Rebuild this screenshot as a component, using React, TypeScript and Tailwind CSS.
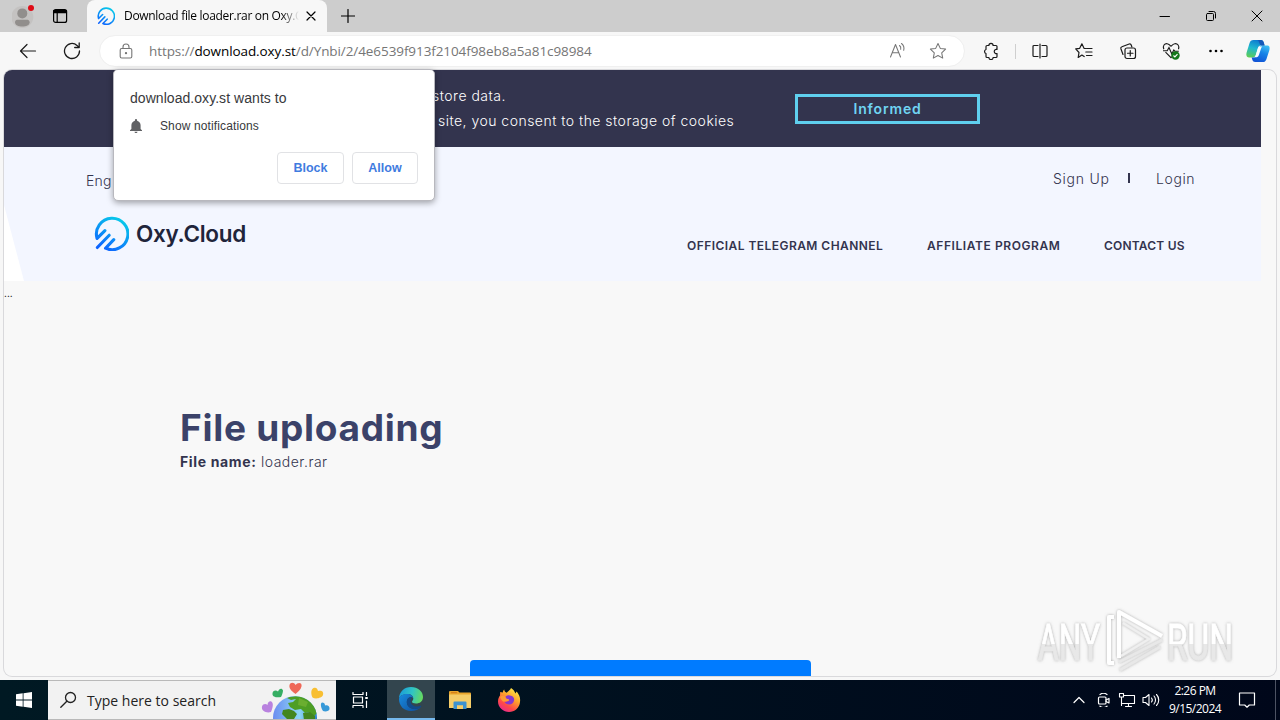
import type { ReactNode } from 'react'

const Line = ({
  children,
  size = 16,
  width = 1,
  className = '',
}: {
  children: ReactNode
  size?: number
  width?: number
  className?: string
}) => (
  <svg
    width={size}
    height={size}
    viewBox={`0 0 ${size} ${size}`}
    fill="none"
    stroke="currentColor"
    strokeWidth={width}
    strokeLinecap="round"
    strokeLinejoin="round"
    className={`block shrink-0 ${className}`}
  >
    {children}
  </svg>
)

const OxyLogo = ({ size, id }: { size: number; id: string }) => (
  <svg width={size} height={size} viewBox="0 0 34 34" fill="none" className="block shrink-0">
    <defs>
      <linearGradient id={id} x1="25" y1="3" x2="9" y2="32" gradientUnits="userSpaceOnUse">
        <stop stopColor="#08c8ea" />
        <stop offset="1" stopColor="#0d64ff" />
      </linearGradient>
    </defs>
    <g stroke={`url(#${id})`} strokeWidth="3" strokeLinecap="round" strokeLinejoin="round">
      <path d="M10.600 14.200 3 21.800A15.300 15.300 0 1 1 11.200 31.300l8-8.300" />
      <path d="M3.200 30.600 14.800 18.700" />
    </g>
  </svg>
)

const TitleBar = () => (
  <div className="flex h-8 shrink-0 items-center bg-[#cdcdcd] text-black">
    <div className="flex w-[87px] shrink-0 items-center">
      <svg width="24" height="26" viewBox="0 0 24 26" className="ml-3 block">
        <circle cx="10.3" cy="14" r="11" fill="#c4c2c1" />
        <circle cx="10.3" cy="10.4" r="5" fill="#918e8c" />
        <path d="M3 19.3c0-2 1.5-2.5 3-2.5h8.6c1.6 0 3 .5 3 2.5 0 3-3.5 4.3-7.3 4.3S3 22.300 3 19.300Z" fill="#918e8c" />
        <circle cx="19" cy="5" r="3" fill="#df0b16" />
      </svg>
      <Line size={16} width={1.2} className="ml-4">
        <rect x="1.6" y="1.600" width="13" height="12.800" rx="2" />
        <path d="M2 3h12M2 4.200h12" strokeWidth="2.200" />
        <path d="M5.200 5v9" />
      </Line>
    </div>
    <div className="flex h-8 w-[240px] shrink-0 items-center rounded-t-lg bg-[#f7f7f7]">
      <div className="ml-[10px]">
        <OxyLogo size={18} id="tab" />
      </div>
      <span className="ml-[9px] w-[175px] whitespace-nowrap bg-linear-to-r from-black from-90% to-transparent bg-clip-text font-['Open_Sans','Noto_Sans',sans-serif] text-[12px] leading-4 tracking-[-0.310px] text-transparent">
        Download file loader.rar on Oxy.C
      </span>
      <Line size={10} width={1.200} className="ml-[7px]">
        <path d="m1 1 8 8M9 1 1 9" />
      </Line>
    </div>
    <Line size={14} width={1.200} className="ml-[14px]">
      <path d="M7 .5v13M.5 7h13" />
    </Line>
    <div className="ml-auto flex items-center">
      <Line size={12}>
        <path d="M1 6.500h9.500" />
      </Line>
      <Line size={12} className="ml-[34px]">
        <rect x="1.500" y="3.500" width="7" height="7" rx="1" />
        <path d="M4 1.500h4.500a2 2 0 0 1 2 2V8" />
      </Line>
      <Line size={12} className="ml-[34px] mr-[17px]">
        <path d="m1 1 10 10M11 1 1 11" />
      </Line>
    </div>
  </div>
)

const Copilot = () => (
  <svg width="24" height="24" viewBox="0 0 24 24" className="block shrink-0">
    <defs>
      <linearGradient id="cpA" x1="9" y1="1" x2="4" y2="19" gradientUnits="userSpaceOnUse">
        <stop stopColor="#0d7dd0" />
        <stop offset=".45" stopColor="#20b8cf" />
        <stop offset="1" stopColor="#63cf4d" />
      </linearGradient>
      <linearGradient id="cpB" x1="20" y1="5" x2="13" y2="23" gradientUnits="userSpaceOnUse">
        <stop stopColor="#42c8f5" />
        <stop offset=".5" stopColor="#1683e7" />
        <stop offset="1" stopColor="#1155d6" />
      </linearGradient>
    </defs>
    <path d="M7.500 1h7.200c2 0 2.700 1.300 3.200 3l.7 2.500H15c-2 0-2.700 1.200-3.200 3l-2 6.500c-.5 1.600-1.200 2.500-3 2.500H3C.4 18.500 0 16 .6 13.600L3.500 4.200C4.200 2 5.300 1 7.500 1Z" fill="url(#cpA)" />
    <path d="M16.700 23H9.300c-2 0-2.700-1.300-3.200-3l-.5-1.500h1.900c2 0 2.900-1.200 3.400-3l2-6c.5-1.800 1.400-3 3.200-3H21c2.600 0 3 2 2.400 4.400l-2.900 9C19.800 22 18.900 23 16.700 23Z" fill="url(#cpB)" />
    <path d="M11 1h3.700c2 0 2.700 1.300 3.200 3l.7 2.500h-3.200C13.200 6.500 13.500 1 11 1Z" fill="#1558b8" />
    <path d="m11.800 9.500-2 6.500c-.3 1-.8 1.900-1.500 2.300h2.200c1.300 0 2-1 2.400-2.200l2-6.200c.3-1 .7-1.800 1.400-2.300h-2c-1.400 0-2.100.8-2.500 1.900Z" fill="#f7fbff" />
  </svg>
)

const Toolbar = () => (
  <div className="flex h-[38px] shrink-0 items-center bg-[#f7f7f7] text-[#1b1b1b]">
    <Line size={18} width={1.200} className="ml-[19px]">
      <path d="M16.500 9H1.500M8 2.500 1.500 9 8 15.500" />
    </Line>
    <Line size={18} width={1.300} className="ml-[26px]">
      <path d="M16.500 9A7.500 7.500 0 1 1 14 3.400l2 2M16.200 1v4.500h-4.500" />
    </Line>
    <div className="ml-[19px] flex h-[30px] w-[864px] items-center rounded-full bg-white text-[#767676] outline outline-[#f0f0f0]">
      <Line size={16} width={1.100} className="ml-[18px]">
        <rect x="2.200" y="5.500" width="11.600" height="9.500" rx="1.500" />
        <path d="M5 5.500V4a3 3 0 0 1 6 0v1.500" />
        <circle cx="8" cy="10.200" r=".6" fill="currentColor" />
      </Line>
      <span className="ml-[15px] w-[460px] whitespace-nowrap font-['Open_Sans','Noto_Sans',sans-serif] text-[13.500px] leading-5 tracking-[-0.085px]">
        https://<span className="text-black">download.oxy.st</span>/d/Ynbi/2/4e6539f913f2104f98eb8a5a81c98984
      </span>
      <Line size={18} width={1.050} className="ml-auto">
        <path d="m1.500 15 5-12.500 5 12.500M3.200 10.700h6.600M10.500 3.500c1.200.9 1.600 2.200 1.200 3.800M12.500 1.500c2.300 1.700 2.900 4 2.200 6.800" />
      </Line>
      <Line size={18} width={1.050} className="ml-[22px] mr-[17px]">
        <path d="m9 1.500 2.300 4.900 5.300.7-3.900 3.700 1 5.300L9 13.500l-4.700 2.600 1-5.300-3.900-3.700 5.300-.7Z" />
      </Line>
    </div>
    <Line size={18} width={1.200} className="ml-[18px]">
      <path d="M5.500 3.500h1.400a2.100 2.100 0 0 1 4.200 0H14a1 1 0 0 1 1 1v3a2.100 2.100 0 1 0 0 4v3a1 1 0 0 1-1 1h-2.900a2.100 2.100 0 0 1-4.200 0H5a1 1 0 0 1-1-1v-3a2.100 2.100 0 0 1 0-4v-3a1 1 0 0 1 1-1Z" />
    </Line>
    <div className="ml-[15px] h-[15px] w-px bg-[#cfcfcf]" />
    <Line size={16} width={1.200} className="ml-4">
      <path d="M6 2.500H2a1 1 0 0 0-1 1v9a1 1 0 0 0 1 1h4M10 2.500h4a1 1 0 0 1 1 1v9a1 1 0 0 1-1 1h-4M8 1v14" />
    </Line>
    <Line size={18} width={1.200} className="ml-[27px]">
      <path d="M10.800 6.500 9 6.300 6.900 1.800 4.700 6.300l-4 .6L4 10.500l-.8 5L6.900 13l2.300 1.500M11.500 6.500H17M10.800 10H17M11.500 13.500H17" />
    </Line>
    <Line size={18} width={1.200} className="ml-[26px]">
      <path d="M4 12.500 1.900 6.800a1.600 1.600 0 0 1 1-2L10.200 2a1.600 1.600 0 0 1 2 1l.7 2" />
      <rect x="6" y="6" width="10.500" height="10.500" rx="2" />
      <path d="M11.250 8.500v5.500M8.500 11.250H14" />
    </Line>
    <svg width="20" height="18" viewBox="0 0 20 18" fill="none" stroke="#1b1b1b" strokeWidth="1.150" className="ml-[25px] mr-px block shrink-0">
      <path d="M1.800 7.200C.4 3.700 2.600 1.400 5.200 1.700c1.800.2 2.900 1.500 3.800 2.500 1-1 2-2.300 3.800-2.500 2.700-.3 4.900 2 3.700 5.500M3.500 10.200 9 15.700l1-1M1 8.700h4.200L7 5.500l2.800 6.500 2-4 1 1.200h4" />
      <circle cx="13.500" cy="13.500" r="4.200" fill="#14781b" stroke="none" />
      <path d="m11.500 13.500 1.400 1.400 2.600-2.700" stroke="#fff" />
    </svg>
    <svg width="16" height="4" viewBox="0 0 16 4" className="ml-[25px] block">
      <circle cx="2.500" cy="2" r="1.300" />
      <circle cx="8" cy="2" r="1.300" />
      <circle cx="13.500" cy="2" r="1.300" />
    </svg>
    <div className="ml-auto mr-[10px]">
      <Copilot />
    </div>
  </div>
)

const PermissionPopup = () => (
  <div className="absolute left-[109px] top-[-1px] z-10 h-[132px] w-[322px] rounded-[5px] border border-[#b8b8be] bg-white px-4 shadow-[0_2px_6px_rgba(0,0,0,0.35)] font-['Liberation_Sans',sans-serif] text-[#38393c]">
    <p className="pt-[18px] text-[14px] leading-5 tracking-[0.050px]">
      download.oxy.st wants to
    </p>
    <div className="mt-[8px] flex items-center">
      <svg width="12" height="14" viewBox="0 0 12 14" fill="#606164">
        <path d="M6 14c.8 0 1.500-.6 1.500-1.300h-3C4.500 13.400 5.200 14 6 14Zm4.600-4V6.300c0-2.200-1.300-4-3.500-4.600V1.200a1.100 1.100 0 0 0-2.200 0v.5c-2.200.6-3.500 2.400-3.500 4.600V10L0 11.300v.7h12v-.7Z" />
      </svg>
      <span className="ml-[18px] text-[12px] leading-5 tracking-[0.120px]">Show notifications</span>
    </div>
    <div className="mt-4 flex w-[288px] justify-end gap-2 text-[12.500px] font-bold text-[#3f7be0]">
      <button className="h-8 w-[67px] rounded border border-[#e1e2e5]">Block</button>
      <button className="h-8 w-[66px] rounded border border-[#e1e2e5]">Allow</button>
    </div>
  </div>
)

const Page = () => (
  <div className="h-[606px] w-[1257px] shrink-0 font-[Inter,sans-serif] text-[#33344e]">
    <div className="flex h-[77px] bg-[#33344e] text-white">
      <div className="w-[791px] whitespace-nowrap pl-[428px] pt-[13px] text-[14px] leading-[25px] font-light">
        <p className="tracking-[0.500px]">store data.</p>
        <p className="pl-[6px] tracking-[0.480px]">site, you consent to the storage of cookies</p>
      </div>
      <button className="mt-6 h-[30px] w-[185px] border-[3px] border-[#5fcfee] text-[14px] leading-[22px] font-semibold tracking-[0.850px] text-[#70d4f2]">
        Informed
      </button>
    </div>
    <div className="relative h-[134px] bg-[#f3f6ff]">
      <svg width="20" height="76" viewBox="0 0 20 76" className="absolute bottom-0 left-0">
        <path d="M0 0 20 76H0Z" fill="#fff" />
      </svg>
      <div className="flex h-[62px] items-start pl-[82px] text-[14px] leading-5 font-light">
        <span className="mt-6 tracking-[0.200px]">Eng</span>
        <div className="ml-auto mt-[22px] flex w-[208px]">
          <span className="w-[75px] tracking-[0.750px]">Sign Up</span>
          <span className="mt-1 h-[10px] w-[2px] bg-[#33344e]" />
          <span className="ml-[26px] tracking-[0.600px]">Login</span>
        </div>
      </div>
      <div className="flex h-[72px] items-start pl-[90px]">
        <div className="mt-[7px] flex items-center">
          <OxyLogo size={35} id="brand" />
          <span className="ml-[7px] text-[22.500px] leading-[34px] font-semibold tracking-[-0.300px] text-[#20243a]">
            Oxy.Cloud
          </span>
        </div>
        <nav className="ml-auto mt-[27px] flex w-[574px] whitespace-nowrap text-[12px] leading-5 font-semibold">
          <span className="w-[240px] tracking-[0.450px]">OFFICIAL TELEGRAM CHANNEL</span>
          <span className="w-[177px] tracking-[0.580px]">AFFILIATE PROGRAM</span>
          <span className="tracking-[0.200px]">CONTACT US</span>
        </nav>
      </div>
    </div>
    <p className="text-[10px] leading-6 text-black">...</p>
    <div className="ml-[176px] mt-[98px]">
      <h1 className="text-[37px] leading-[50px] font-bold tracking-[0.720px] text-[#3b4269]">File uploading</h1>
      <p className="mt-[-1px] text-[14px] leading-5 font-light tracking-[0.480px]">
        <b className="font-bold tracking-[0.650px]">File name:</b> loader.rar
      </p>
    </div>
    <div className="ml-[466px] mt-[188px] h-4 w-[341px] rounded-t bg-[#007bff]" />
  </div>
)

const Watermark = () => (
  <svg width="206" height="72" viewBox="0 0 206 72" className="absolute bottom-0 right-[36px] overflow-visible">
    <defs>
      <linearGradient id="wm" x1="0" y1="0" x2="0" y2="1">
        <stop offset=".52" stopColor="#fff" />
        <stop offset=".53" stopColor="#e8e8e8" />
      </linearGradient>
      <filter id="soft" x="-10%" y="-10%" width="120%" height="120%">
        <feDropShadow dx="0" dy="0" stdDeviation="1.500" floodColor="#777" floodOpacity=".6" />
      </filter>
    </defs>
    <g filter="url(#soft)">
      <g fill="url(#wm)" stroke="url(#wm)" strokeWidth=".8" fontFamily="Roboto, sans-serif" fontSize="50">
        <text x="4" y="55.500" textLength="62" lengthAdjust="spacingAndGlyphs">ANY</text>
        <text x="133" y="55.500" textLength="66" lengthAdjust="spacingAndGlyphs">RUN</text>
      </g>
      <g fill="none" stroke="#fff" strokeWidth="4" strokeLinejoin="round">
        <path d="M80 13h-5v46h5" />
        <path d="M85 54V8l43 24" />
        <path d="m89 19 26 16-28 17" strokeWidth="2.500" stroke="#efefef" />
        <path d="m128 36-43 22M126 43 86 66" stroke="#e8e8e8" strokeWidth="3" />
      </g>
    </g>
  </svg>
)

const Earth = () => (
  <svg width="70" height="38" viewBox="0 0 70 38" className="block self-end">
    <defs>
      <linearGradient id="sea" x1="0" y1="0" x2="1" y2="0">
        <stop stopColor="#6b8df0" />
        <stop offset=".6" stopColor="#8dd6f6" />
        <stop offset="1" stopColor="#2c82c8" />
      </linearGradient>
      <clipPath id="globe"><circle cx="35" cy="37" r="22" /></clipPath>
    </defs>
    <circle cx="35" cy="37" r="22" fill="url(#sea)" />
    <g clipPath="url(#globe)">
      <path d="M27 17c4-2 14-3 20 1 6 4 9 8 10 14l-3 3-5-4-4 1-4-4-6 1-5-3-2-4 5-1 3-3-5 1Z" fill="#4e9e24" />
      <path d="M23 29l6-1 5 2 3 3-3 5h-7l-5-5ZM43 32l7-1 5 4v4H44Z" fill="#43861f" />
      <path d="m39 17 9 4-2 5-8-2Z" fill="#6aae30" />
    </g>
    <path d="M35.500 13c-2-2-7-4.500-6-9 1-3.500 5-2.500 6 0 2-3 7-3 6 1.500-.5 3-4 5.500-6 7.500Z" fill="#ef6858" />
    <path d="M21 16c-4 1-9 0-8.500-3.500 0-3 3.500-4 5.500-2 1-3 4-4 5-1 0 2-1 4.500-2 6.500Z" fill="#36ae63" />
    <path d="M52.500 16.500c-1.500-3-2-8 1-9.500 3-1 4 1 4.500 3 3-1 6 0 5 4-1 3-7.500 4.500-10.500 2.500Z" fill="#f8bf32" />
    <path d="M11 31c-4.500 1.500-10-1-9-5.500 1-3 4-3 5.500-1.500 0-4 4-5 5-2 1 2-.5 7-1.500 9Z" fill="#b982df" />
    <path d="M63 30c-2-3-3-7.500-1-8.500 2 0 3 1 3 3 2-1 5 0 4.500 3.500 0 2-4 3-6.500 2Z" fill="#3799d8" />
  </svg>
)

const EdgeLogo = () => (
  <svg width="26" height="26" viewBox="0 0 26 26" className="block">
    <defs>
      <linearGradient id="edA" x1="2" y1="6" x2="25" y2="12" gradientUnits="userSpaceOnUse">
        <stop stopColor="#1c9ed8" />
        <stop offset=".5" stopColor="#30c4c5" />
        <stop offset="1" stopColor="#69db59" />
      </linearGradient>
      <linearGradient id="edB" x1="3" y1="10" x2="18" y2="24" gradientUnits="userSpaceOnUse">
        <stop stopColor="#1785d8" />
        <stop offset="1" stopColor="#1054a3" />
      </linearGradient>
    </defs>
    <path d="M1 13C1 5.500 6.500 1 13 1c7 0 12 4.500 12 10 0 4.500-3.500 6.500-7 6.500-2.500 0-4-.8-4-1.700 0-.7 1.300-1.200 1.300-3.200 0-2.500-2.300-4.600-5.800-4.600C4.500 8 1.200 10.500 1 13Z" fill="url(#edA)" />
    <path d="M1 13c.2-3 3.700-5 8.500-5 3 0 5.800 2 5.800 4.600-.5-1-1.300-1.500-2.500-1.500-2.400 0-4 2.200-4 4.900 0 4.500 4 7 8 7 2.500 0 4.500-1 6-2-2 2.700-5.500 4-9.800 4C6 25 1 20 1 13Z" fill="url(#edB)" />
    <path d="M8.800 16c0 4.500 4 7 8 7 2.500 0 4.500-1 6.200-2.300.6-.7.300-1.200-.3-.9-5.500 2.200-10.200-1-10.200-4.600 0-1.400.6-2.600 1.600-3.600-3-1.500-5.300 1.400-5.300 4.400Z" fill="#114a8b" />
  </svg>
)

const Explorer = () => (
  <svg width="24" height="24" viewBox="0 0 24 24" className="block">
    <path d="M1 4.500V4a1 1 0 0 1 1-1h8l1.500 1.500H22a1 1 0 0 1 1 1v4H1Z" fill="#e9a62c" />
    <path d="M1 6.500h22V20H1Z" fill="#f5cd68" />
    <path d="M3 4.200h6v1H3Z" fill="#d27a18" />
    <path d="M5.500 21v-6.500a1 1 0 0 1 1-1h11a1 1 0 0 1 1 1V21H15v-3.500H9V21Z" fill="#3c92cf" />
    <path d="M9 21v-3.500h6V21Z" fill="#f5cd68" />
  </svg>
)

const Firefox = () => (
  <svg width="24" height="26" viewBox="0 0 24 26" className="block">
    <defs>
      <linearGradient id="fx" x1="20" y1="2" x2="6" y2="24" gradientUnits="userSpaceOnUse">
        <stop stopColor="#fff04a" />
        <stop offset=".4" stopColor="#ffa42c" />
        <stop offset=".75" stopColor="#ff4848" />
        <stop offset="1" stopColor="#e92b8d" />
      </linearGradient>
    </defs>
    <path d="M5.800 5.500C6 4 6.500 3 7.200 2.500c.2 1.800 1.200 2.800 2.500 3.300C11 4 13 3.500 14 1c2.500 1.500 3.800 3.500 4.300 5.500l1.400-2C22.500 8 23.500 11 23 15c-.5 6-5.500 10-11 10S1 20.500 1 14.500c0-2.500.8-4.500 2-6L3.200 5c.8.200 1.700.3 2.600.5Z" fill="url(#fx)" />
    <path d="M8.500 9.800c1-1.500 3.500-2 5.500-1 2.500.6 3.500 2.600 3 5-.5 2.400-2.500 3.700-4.600 3.700-2.400 0-4.400-1.200-4.900-3 1.700.4 3.700.2 4.900-1.200-2-.1-3.300-1.500-3.900-3.500Z" fill="#8638cf" />
    <path d="M3 10c1.500-1.500 3.800-1.500 5.500-.3-.5 1.300.5 2 2.500 2.300 1 .2 1.500.7.500 1.400-1 .8-2.800.8-4.300 1.200C5.500 15 4.500 13 3 10Z" fill="#ff9b34" />
  </svg>
)

const Taskbar = () => (
  <div className="flex h-10 shrink-0 items-center bg-linear-to-r from-[#001923] to-[#00071a] text-white">
    <div className="flex w-12 shrink-0 justify-center">
      <svg width="16" height="16" viewBox="0 0 16 16" fill="#fff" className="block">
        <path d="M0 2.300 6.700 1.300v6.200H0ZM7.500 1.200 16 0v7.500H7.500ZM0 8.400h6.700v6.300L0 13.700ZM7.500 8.400H16V16l-8.500-1.200Z" />
      </svg>
    </div>
    <div className="flex h-10 w-[288px] shrink-0 items-center border-y border-[#b9b9b9] bg-[#f2f2f2] text-[#222]">
      <Line size={18} width={1.300} className="ml-[11px]">
        <circle cx="11.500" cy="6.500" r="5" />
        <path d="m7.800 10.200-6 6" />
      </Line>
      <span className="mt-[2px] ml-[10px] w-[173px] font-['Open_Sans','Noto_Sans',sans-serif] text-[14px] leading-5 tracking-[0.010px]">Type here to search</span>
      <Earth />
    </div>
    <div className="flex w-[51px] shrink-0 justify-center">
      <Line size={16} width={1.200} className="mr-[4px]">
        <path d="M1 .5v2h10v-2M1 15.500v-2h10v2M1.500 5h9v6h-9ZM14.500.5v3M14.500 9v6.500" />
        <path d="M14.500 5v2" strokeWidth="2.500" strokeLinecap="butt" />
      </Line>
    </div>
    <div className="flex h-10 w-12 shrink-0 items-center justify-center border-b-2 border-[#76b9ed] bg-[#33454e]">
      <EdgeLogo />
    </div>
    <div className="ml-[13px]"><Explorer /></div>
    <div className="ml-[25px]"><Firefox /></div>
    <div className="ml-auto flex items-center">
      <Line size={12} width={1.200} className="mr-[12px]">
        <path d="m1 8.500 5-5 5 5" />
      </Line>
      <Line size={14} width={1.200} className="mr-[7px]">
        <rect x="1.500" y="4" width="7.500" height="7" rx="1" />
        <path d="m9 7 3-1.500v4.500L9 8.500M3 1.500c2-1.500 5-1.500 7 0M3 13.200c2 1.500 5 1.500 7 0" />
      </Line>
      <Line size={18} width={1.100} className="mr-[6px]">
        <path d="M6 4.500h10.500v8H4.500M10.500 12.500v3M7.500 15.500h6M1.500 2.500h4v3.500h-4ZM3.500 6v8.500" />
      </Line>
      <Line size={18} width={1.100} className="mr-[8px]">
        <path d="M1 6.500h2.500L7 3.500v11l-3.500-3H1ZM9.500 7c1 1.200 1 2.800 0 4M12 5c2 2.200 2 5.800 0 8M14.500 3.500c3 3.200 3 7.800 0 11" />
      </Line>
      <div className="w-[54px] whitespace-nowrap text-center font-['Open_Sans','Noto_Sans',sans-serif] text-[12px] leading-[18px] tracking-[-0.520px]">
        <p>2:26 PM</p>
        <p>9/15/2024</p>
      </div>
      <Line size={18} width={1.200} className="ml-[16px] mr-[19px]">
        <path d="M1.500 2h15v12h-5.200L9 16.200 6.700 14H1.500Z" />
      </Line>
      <div className="mr-[4px] h-10 w-px bg-[#4d5363]" />
    </div>
  </div>
)

export default function App() {
  return (
    <div className="flex h-[720px] w-[1280px] flex-col overflow-hidden bg-[#f7f7f7]">
      <TitleBar />
      <Toolbar />
      <main className="relative mx-1 mb-1 h-[606px] shrink-0">
        <div className="h-[606px] overflow-hidden rounded-lg bg-[#f8f8f8] shadow-[0_0_0_1px_#d9d9dc]">
          <Page />
        </div>
        <PermissionPopup />
        <Watermark />
      </main>
      <Taskbar />
    </div>
  )
}
